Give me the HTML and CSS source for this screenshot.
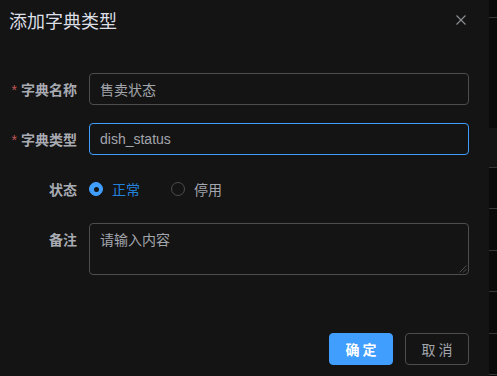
FILE: index.html
```html
<!DOCTYPE html>
<html lang="zh-CN">
<head>
<meta charset="utf-8">
<title>添加字典类型</title>
<link rel="stylesheet" href="styles.css">
</head>
<body>
<div class="page">
  <div class="dialog">
    <div class="dialog-header">
      <span class="dialog-title">添加字典类型</span>
      <button class="close-btn" aria-label="关闭">
        <svg width="12" height="12" viewBox="0 0 12 12"><path d="M1.5 1.5 L10.5 10.5 M10.5 1.5 L1.5 10.5" stroke="#8d9095" stroke-width="1.1" fill="none"/></svg>
      </button>
    </div>
    <div class="dialog-body">
      <div class="form-item">
        <label class="form-label"><span class="req">*</span>字典名称</label>
        <div class="form-content">
          <div class="input"><span class="input-text">售卖状态</span></div>
        </div>
      </div>
      <div class="form-item">
        <label class="form-label"><span class="req">*</span>字典类型</label>
        <div class="form-content">
          <div class="input input-focus"><span class="input-text latin">dish_status</span></div>
        </div>
      </div>
      <div class="form-item">
        <label class="form-label">状态</label>
        <div class="form-content radios">
          <label class="radio checked"><span class="radio-dot"></span><span class="radio-label">正常</span></label>
          <label class="radio"><span class="radio-dot"></span><span class="radio-label">停用</span></label>
        </div>
      </div>
      <div class="form-item">
        <label class="form-label">备注</label>
        <div class="form-content textarea-wrap">
          <textarea class="textarea" placeholder="请输入内容"></textarea>
          <svg class="resize-handle" width="8" height="8" viewBox="0 0 8 8"><path d="M7.5 0.5 L0.5 7.5 M7.5 4 L4 7.5" stroke="#4c4d4f" stroke-width="1" fill="none"/></svg>
        </div>
      </div>
    </div>
    <div class="dialog-footer">
      <button class="btn btn-primary">确 定</button>
      <button class="btn">取 消</button>
    </div>
  </div>
  <div class="strip">
    <div class="s-dark s-h17"></div>
    <div class="s-line"></div>
    <div class="s-dark s-h110"></div>
    <div class="s-light s-h39"></div>
    <div class="s-line"></div>
    <div class="s-dark s-h40"></div>
    <div class="s-line"></div>
    <div class="s-dark s-h41"></div>
    <div class="s-line"></div>
    <div class="s-dark s-h40"></div>
    <div class="s-line"></div>
    <div class="s-dark s-h41"></div>
    <div class="s-line"></div>
    <div class="s-dark s-h40"></div>
    <div class="s-line"></div>
  </div>
</div>
</body>
</html>
```

FILE: styles.css
```css
* { box-sizing: border-box; }
html, body {
  margin: 0;
  padding: 0;
  background: #0a0a0a;
  font-family: "Liberation Sans", "Noto Sans CJK SC", sans-serif;
  font-size: 14px;
}
.page {
  display: flex;
  width: 497px;
  height: 376px;
  overflow: hidden;
}
.dialog {
  width: 489px;
  height: 376px;
  background: #141414;
  display: flex;
  flex-direction: column;
}
.dialog-header {
  height: 40px;
  padding: 8px 22px 0 9px;
  display: flex;
  justify-content: space-between;
  align-items: flex-start;
}
.dialog-title {
  font-size: 18px;
  line-height: 24px;
  color: #dcdfe6;
  font-family: "Noto Sans CJK SC", sans-serif;
}
.close-btn {
  border: 0;
  background: transparent;
  padding: 0;
  margin-top: 6px;
  width: 12px;
  height: 12px;
  display: flex;
}
.dialog-body {
  padding: 33px 20px 0 9px;
}
.form-item {
  display: flex;
  margin-bottom: 18px;
}
.form-label {
  width: 80px;
  flex: none;
  padding-right: 12px;
  text-align: right;
  line-height: 32px;
  height: 32px;
  color: #a8abb2;
  font-weight: bold;
  font-family: "Noto Sans CJK SC", sans-serif;
  font-size: 14px;
}
.req {
  color: #c45656;
  margin-right: 4px;
  font-weight: normal;
  font-family: "Liberation Sans", sans-serif;
}
.form-content {
  flex: 1;
  min-height: 32px;
}
.input {
  height: 32px;
  border: 1px solid #4c4d4f;
  border-radius: 4px;
  padding: 0 11px 0 10px;
  display: flex;
  align-items: center;
}
.input-focus {
  border-color: #409eff;
}
.input-text {
  color: #a3a6ad;
  font-family: "Noto Sans CJK SC", sans-serif;
  font-size: 14px;
}
.input-text.latin {
  font-family: "Liberation Sans", sans-serif;
}
.radios {
  display: flex;
  align-items: center;
  height: 32px;
}
.radio {
  display: flex;
  align-items: center;
  margin-right: 31px;
}
.radio-dot {
  width: 14px;
  height: 14px;
  border-radius: 50%;
  border: 1px solid #4c4d4f;
  display: flex;
  align-items: center;
  justify-content: center;
}
.radio.checked .radio-dot {
  border-color: #409eff;
  background: #409eff;
}
.radio.checked .radio-dot::after {
  content: "";
  width: 5px;
  height: 5px;
  border-radius: 50%;
  background: #141414;
}
.radio-label {
  padding-left: 9px;
  color: #a3a6ad;
  font-family: "Noto Sans CJK SC", sans-serif;
}
.radio.checked .radio-label {
  color: #2482dd;
}
.textarea-wrap {
  position: relative;
}
.textarea {
  display: block;
  width: 100%;
  height: 52px;
  background: transparent;
  border: 1px solid #4c4d4f;
  border-radius: 4px;
  padding: 5px 11px 5px 10px;
  font-family: "Noto Sans CJK SC", sans-serif;
  font-size: 14px;
  line-height: 21px;
  color: #a3a6ad;
  resize: none;
  outline: none;
}
.textarea::placeholder {
  color: #a3a6ad;
}
.resize-handle {
  position: absolute;
  right: 2px;
  bottom: 2px;
}
.dialog-footer {
  display: flex;
  justify-content: flex-end;
  gap: 12px;
  padding: 40px 20px 0 0;
}
.btn {
  width: 64px;
  height: 32px;
  border-radius: 4px;
  border: 1px solid #4c4d4f;
  background: transparent;
  color: #a3a6ad;
  font-family: "Noto Sans CJK SC", sans-serif;
  font-size: 14px;
  padding: 0;
}
.btn-primary {
  background: #409eff;
  border-color: #409eff;
  color: #ffffff;
  font-weight: bold;
}
.strip {
  width: 8px;
  display: flex;
  flex-direction: column;
}
.s-dark { background: #0a0a0a; }
.s-light { background: #141414; }
.s-line { height: 1px; background: #363637; flex: none; }
.s-h17 { height: 17px; flex: none; }
.s-h110 { height: 110px; flex: none; }
.s-h39 { height: 39px; flex: none; }
.s-h40 { height: 40px; flex: none; }
.s-h41 { height: 41px; flex: none; }
```
